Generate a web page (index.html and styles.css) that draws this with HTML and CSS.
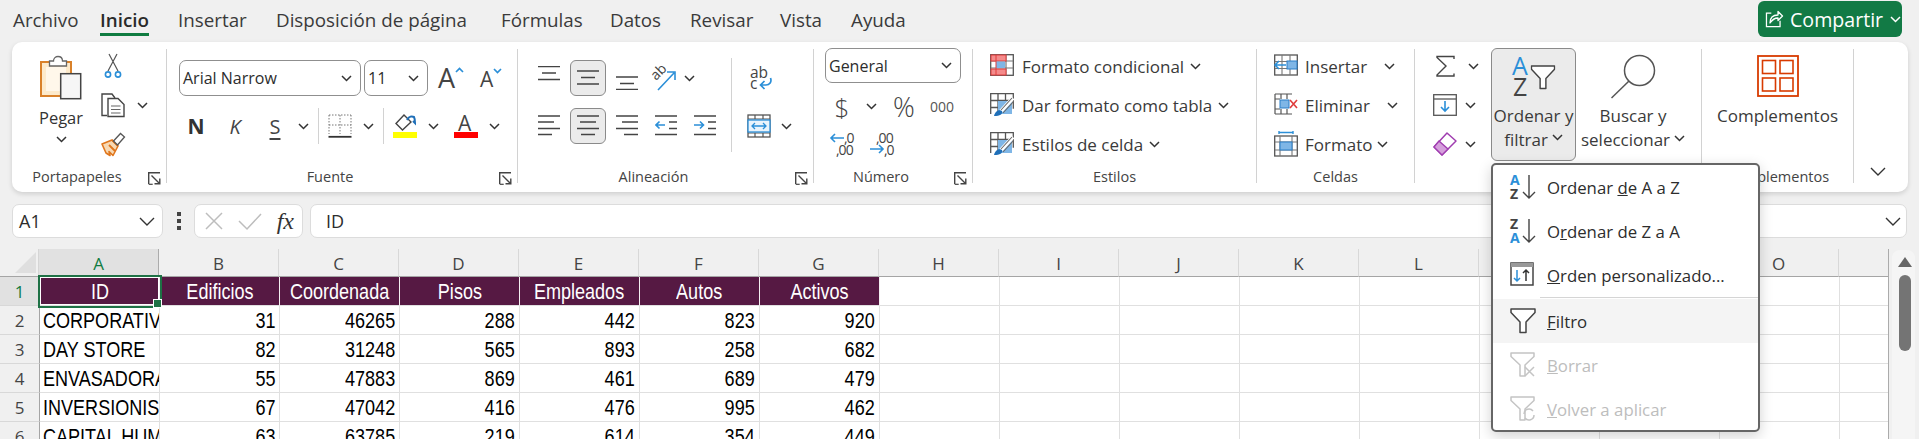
FILE: index.html
```html
<!DOCTYPE html>
<html lang="es">
<head>
<meta charset="utf-8">
<title>Excel</title>
<link rel="stylesheet" href="styles.css">
</head>
<body>
<svg class="defs" aria-hidden="true">
  <symbol id="chev" viewBox="0 0 11 7"><path d="M1 1l4.5 4.5L10 1" fill="none" stroke="#333" stroke-width="1.5"/></symbol>
  <symbol id="launch" viewBox="0 0 13 13"><path d="M.7 12V.7H12M3.5 3.5l8 8M11.8 6.5v5.3H6.5" fill="none" stroke="#444" stroke-width="1.4"/><path d="M.7 12.3h4" stroke="#444" stroke-width="1.2"/></symbol>
  <symbol id="al-top" viewBox="0 0 22 24"><path d="M0 .5h22M4 7h14M0 13.5h22" stroke="#444" stroke-width="1.3"/></symbol>
  <symbol id="al-mid" viewBox="0 0 22 24"><path d="M0 5h22M4 11.5h14M0 18h22" stroke="#444" stroke-width="1.3"/></symbol>
  <symbol id="al-bot" viewBox="0 0 22 24"><path d="M0 11h22M4 17.5h14M0 23.5h22" stroke="#444" stroke-width="1.3"/></symbol>
  <symbol id="h-left" viewBox="0 0 22 24"><path d="M0 2h22M0 8h16M0 14.5h22M0 20.5h14" stroke="#444" stroke-width="1.3"/></symbol>
  <symbol id="h-center" viewBox="0 0 22 24"><path d="M0 2h22M3 8h16M0 14.5h22M4 20.5h14" stroke="#444" stroke-width="1.3"/></symbol>
  <symbol id="h-right" viewBox="0 0 22 24"><path d="M0 2h22M6 8h16M0 14.5h22M8 20.5h14" stroke="#444" stroke-width="1.3"/></symbol>
  <symbol id="outdent" viewBox="0 0 22 24"><path d="M0 2h22M14 8h8M14 14.5h8M0 20.5h22" stroke="#444" stroke-width="1.3"/><path d="M10 11H1M4.500 7.500L1 11l3.500 3.500" fill="none" stroke="#2b8fd8" stroke-width="1.6"/></symbol>
  <symbol id="indent" viewBox="0 0 22 24"><path d="M0 2h22M14 8h8M14 14.5h8M0 20.500h22" stroke="#444" stroke-width="1.3"/><path d="M0 11h9.500M6 7.500L9.500 11 6 14.500" fill="none" stroke="#2b8fd8" stroke-width="1.6"/></symbol>
  <symbol id="brushgrid" viewBox="0 0 24 24"><path d="M.7 21V.7h22.600v15M.7 7.500h22.600M8 .7v20.300M15.500.7v10M.7 14.500h8" fill="none" stroke="#555" stroke-width="1.3"/><rect x="8" y="8" width="14" height="13" fill="#7fb6e6"/><path d="M23 5L11 18" stroke="#fff" stroke-width="4"/><path d="M22 5L11 17M24 8L13 20" stroke="#666" stroke-width="1.1"/><path d="M4 23c1-4 4-7 8-5 1 3-2 5-8 5z" fill="#1f6fb8"/></symbol>
  <symbol id="funnel" viewBox="0 0 26 26"><path d="M1 1h24v3.500L16 14v10.500h-6V14L1 4.500z" fill="#fff" stroke="#444" stroke-width="1.500" stroke-linejoin="round"/></symbol>
</svg>

<header class="topbar">
  <nav class="tabs">
    <span class="tab">Archivo</span>
    <span class="tab tab-active"><span class="tab-text">Inicio</span></span>
    <span class="tab">Insertar</span>
    <span class="tab">Disposición de página</span>
    <span class="tab">Fórmulas</span>
    <span class="tab">Datos</span>
    <span class="tab">Revisar</span>
    <span class="tab">Vista</span>
    <span class="tab">Ayuda</span>
  </nav>
  <button class="share">
    <svg class="ic" width="18" height="18" viewBox="0 0 18 18"><path d="M6 3H1v14h14v-6" fill="none" stroke="#fff" stroke-width="1.300" transform="translate(.5 .2) scale(.97)"/><path d="M5 13c0-5 3-8 8-8V1.500L17.500 6 13 10.500V8c-4 0-6 2-8 5z" fill="none" stroke="#fff" stroke-width="1.300" stroke-linejoin="round"/></svg>
    <span class="share-text">Compartir</span>
    <svg class="chev" viewBox="0 0 11 7"><path d="M1 1l4.500 4.500L10 1" fill="none" stroke="#fff" stroke-width="1.500"/></svg>
  </button>
</header>

<section class="ribbon">
  <!-- Portapapeles -->
  <div class="group g-clip">
    <div class="body clip-body">
      <div class="big-paste">
        <svg width="42" height="45" viewBox="0 0 42 45">
          <rect x="1" y="7" width="30" height="34" fill="#fdeacb" stroke="#d9812a" stroke-width="2"/>
          <rect x="6" y="12" width="20" height="24" fill="#fff7ea"/>
          <path d="M9.500 11V6h4c0-6 9-6 9 0h4v5z" fill="#fff" stroke="#666" stroke-width="1.300"/>
          <rect x="20.700" y="18.700" width="20" height="25" fill="#f6f6f6" stroke="#444" stroke-width="1.500"/>
        </svg>
        <span class="paste-text">Pegar</span>
        <svg class="chev"><use href="#chev"/></svg>
      </div>
      <div class="stack">
        <div class="line">
          <svg width="24" height="24" viewBox="0 0 24 24"><path d="M8 0l9 17M16 0L7 17" stroke="#555" stroke-width="1.200" fill="none"/><circle cx="7" cy="20.500" r="2.600" fill="none" stroke="#2b8fd8" stroke-width="1.600"/><circle cx="17" cy="20.500" r="2.600" fill="none" stroke="#2b8fd8" stroke-width="1.600"/></svg>
        </div>
        <div class="line">
          <svg width="24" height="24" viewBox="0 0 24 24"><path d="M6 22.500H1V1h10l3 4" fill="none" stroke="#444" stroke-width="1.400"/><path d="M7 5.500h10l6 6v12H7z" fill="#fff" stroke="#444" stroke-width="1.400"/><path d="M10 13h9.500M10 16.500h9.500M10 20h9.500" stroke="#666" stroke-width="1.200"/></svg>
          <svg class="chev chev-copy"><use href="#chev"/></svg>
        </div>
        <div class="line">
          <svg width="24" height="24" viewBox="0 0 24 24"><path d="M1 12l10-4 6 6-5 9.500-4-4 1 4-4-2.500z" fill="#f7d9b4" stroke="#e0761c" stroke-width="1.600" stroke-linejoin="round"/><path d="M8 13l6 6M11 8l6 6" stroke="#e0761c" stroke-width="1.800"/><path d="M12.500 9l7-7.500 4 3.500-7 8z" fill="#fff" stroke="#555" stroke-width="1.300"/></svg>
        </div>
      </div>
    </div>
    <div class="label"><span class="label-text">Portapapeles</span><svg class="launch"><use href="#launch"/></svg></div>
  </div>

  <!-- Fuente -->
  <div class="group g-font">
    <div class="body font-body">
      <div class="font-row1">
        <div class="combo combo-font"><span>Arial Narrow</span><svg class="chev"><use href="#chev"/></svg></div>
        <div class="combo combo-size"><span>11</span><svg class="chev"><use href="#chev"/></svg></div>
        <svg class="grow" width="26" height="24" viewBox="0 0 26 24"><text x="0" y="22" class="svgt" font-size="27" fill="#444">A</text><path d="M18 6l3.500-3.500L25 6" fill="none" stroke="#2b8fd8" stroke-width="1.700"/></svg>
        <svg class="shrink" width="22" height="22" viewBox="0 0 22 22"><text x="0" y="20" class="svgt" font-size="21" fill="#444">A</text><path d="M14 2l3.500 3.500L21 2" fill="none" stroke="#2b8fd8" stroke-width="1.700"/></svg>
      </div>
      <div class="font-row2">
        <span class="cell fs fs-n">N</span>
        <span class="cell fs fs-k">K</span>
        <span class="cell fs fs-s">S</span>
        <span class="cell"><svg class="chev"><use href="#chev"/></svg></span>
        <span class="cell"><i class="vsep"></i></span>
        <span class="cell"><svg width="24" height="24" viewBox="0 0 24 24"><path d="M1 1h22M1 1v19M23 1v19M12 1v19M1 11h22" fill="none" stroke="#777" stroke-width="1" stroke-dasharray="1.500 1.500"/><path d="M.5 22.800h23" stroke="#333" stroke-width="1.800"/></svg></span>
        <span class="cell"><svg class="chev"><use href="#chev"/></svg></span>
        <span class="cell"><i class="vsep"></i></span>
        <span class="cell"><svg width="24" height="24" viewBox="0 0 24 24"><path d="M11 1l-8 8.500 6.500 6.500 8.500-8z" fill="#fff" stroke="#444" stroke-width="1.400"/><path d="M14 6c2-4 5-4 7-3 1 2 1 4 1 6l-2-2" fill="none" stroke="#1f6fb8" stroke-width="2"/><rect x="0" y="18" width="24" height="6" fill="#ffff00"/></svg></span>
        <span class="cell"><svg class="chev"><use href="#chev"/></svg></span>
        <span class="cell"><svg width="24" height="24" viewBox="0 0 24 24"><text x="4" y="17" class="svgt" font-size="21" fill="#444">A</text><rect x="0" y="18" width="24" height="6" fill="#ff0000"/></svg></span>
        <span class="cell"><svg class="chev"><use href="#chev"/></svg></span>
      </div>
    </div>
    <div class="label"><span class="label-text">Fuente</span><svg class="launch"><use href="#launch"/></svg></div>
  </div>

  <!-- Alineación -->
  <div class="group g-align">
    <div class="body align-body">
      <div class="align-grid">
        <span class="cell"><svg class="a22"><use href="#al-top"/></svg></span>
        <span class="cell pressed"><svg class="a22"><use href="#al-mid"/></svg></span>
        <span class="cell"><svg class="a22"><use href="#al-bot"/></svg></span>
        <span class="cell orient">
          <svg width="24" height="24" viewBox="0 0 24 24"><text class="svgt" font-size="14" fill="#444" transform="translate(3 15) rotate(-45)">ab</text><path d="M5 24L21 7M14 6h8v8" fill="none" stroke="#2b8fd8" stroke-width="1.600"/></svg>
          <svg class="chev"><use href="#chev"/></svg>
        </span>
        <span class="cell"><svg class="a22"><use href="#h-left"/></svg></span>
        <span class="cell pressed"><svg class="a22"><use href="#h-center"/></svg></span>
        <span class="cell"><svg class="a22"><use href="#h-right"/></svg></span>
        <span class="cell"><svg class="a22"><use href="#outdent"/></svg></span>
        <span class="cell"><svg class="a22"><use href="#indent"/></svg></span>
      </div>
      <i class="vsep vsep-tall"></i>
      <div class="align-right">
        <div class="line wrap-line">
          <svg width="24" height="24" viewBox="0 0 24 24"><text x="0" y="12" class="svgt" font-size="15.500" fill="#444">ab</text><text x="0" y="23" class="svgt" font-size="15.500" fill="#444">c</text><path d="M20.500 12c1.500 4-1 7-4.500 7h-5M14.500 15l-4 4 4 4" fill="none" stroke="#2b8fd8" stroke-width="1.700"/></svg>
        </div>
        <div class="line merge-line">
          <svg width="24" height="24" viewBox="0 0 24 24"><rect x="1" y="1" width="22" height="22" fill="#fff" stroke="#555" stroke-width="1.300"/><path d="M1 5h22M1 19h22M8 1v4M16 1v4M8 19v4M16 19v4" stroke="#555" stroke-width="1.200"/><rect x="1" y="6" width="22" height="12" fill="#eaf4fc" stroke="#2b8fd8" stroke-width="1.300"/><path d="M5 12h14M8 9l-3 3 3 3M16 9l3 3-3 3" fill="none" stroke="#2b8fd8" stroke-width="1.300"/></svg>
          <svg class="chev"><use href="#chev"/></svg>
        </div>
      </div>
    </div>
    <div class="label"><span class="label-text">Alineación</span><svg class="launch"><use href="#launch"/></svg></div>
  </div>

  <!-- Número -->
  <div class="group g-num">
    <div class="body num-body">
      <div class="combo combo-num"><span>General</span><svg class="chev"><use href="#chev"/></svg></div>
      <div class="num-row">
        <span class="cell sym-dollar">$</span>
        <span class="cell"><svg class="chev"><use href="#chev"/></svg></span>
        <span class="cell sym-pct">%</span>
        <span class="cell sym-000">000</span>
      </div>
      <div class="num-row2">
        <svg width="24" height="24" viewBox="0 0 24 24"><path d="M14 8H1M5 4L1 8l4 4" fill="none" stroke="#2b8fd8" stroke-width="1.600"/><text x="14" y="13" class="svgn" font-size="14" fill="#444">,0</text><text x="6" y="25" class="svgn" font-size="14" fill="#444">,00</text></svg>
        <svg width="24" height="24" viewBox="0 0 24 24"><text x="7" y="13" class="svgn" font-size="14" fill="#444">,00</text><path d="M1 19h13M10 15l4 4-4 4" fill="none" stroke="#2b8fd8" stroke-width="1.600"/><text x="15" y="25" class="svgn" font-size="14" fill="#444">,0</text></svg>
      </div>
    </div>
    <div class="label"><span class="label-text">Número</span><svg class="launch"><use href="#launch"/></svg></div>
  </div>

  <!-- Estilos -->
  <div class="group g-style">
    <div class="body stack list-body">
      <div class="line">
        <svg width="24" height="24" viewBox="0 0 24 24"><rect x=".7" y=".7" width="22.600" height="20.600" fill="#fff" stroke="#555" stroke-width="1.300"/><path d="M16 1v20M1 7h22M1 14h22" stroke="#777" stroke-width="1.200"/><rect x="1" y="1" width="15" height="6" fill="#f48b8b" stroke="#e03c3c"/><rect x="1" y="15" width="15" height="6" fill="#f48b8b" stroke="#e03c3c"/><rect x="6" y="7.500" width="9" height="6.500" fill="#7fb6e6"/><path d="M6 1v20" stroke="#e03c3c"/></svg>
        <span>Formato condicional</span><svg class="chev"><use href="#chev"/></svg>
      </div>
      <div class="line">
        <svg width="24" height="24"><use href="#brushgrid"/></svg>
        <span>Dar formato como tabla</span><svg class="chev"><use href="#chev"/></svg>
      </div>
      <div class="line">
        <svg width="24" height="24"><use href="#brushgrid"/></svg>
        <span>Estilos de celda</span><svg class="chev"><use href="#chev"/></svg>
      </div>
    </div>
    <div class="label label-plain"><span class="label-text">Estilos</span></div>
  </div>

  <!-- Celdas -->
  <div class="group g-cell">
    <div class="body stack list-body cell-list">
      <div class="line">
        <svg width="24" height="24" viewBox="0 0 24 24"><rect x=".7" y="1" width="22.600" height="20" fill="#fff" stroke="#555" stroke-width="1.300"/><path d="M8 1v20M16 1v20M1 7.500h22M1 14.500h22" stroke="#777" stroke-width="1.100"/><rect x="13" y="7" width="10" height="8" fill="#7fb6e6" stroke="#2b7fc8"/><path d="M12 11H1M5 7l-4 4 4 4" fill="none" stroke="#2b8fd8" stroke-width="1.600"/></svg>
        <span>Insertar</span><svg class="chev chev-far"><use href="#chev"/></svg>
      </div>
      <div class="line">
        <svg width="24" height="24" viewBox="0 0 24 24"><path d="M1 1h17M1 21h17M1 1v20M7 1v5M13 1v5M7 16v5M13 16v5M1 6h5M1 16h5" fill="none" stroke="#555" stroke-width="1.200"/><rect x="6" y="7" width="9" height="8" fill="#7fb6e6" stroke="#2b7fc8"/><path d="M16 7l7 8M23 7l-7 8" stroke="#e03c3c" stroke-width="1.600"/></svg>
        <span>Eliminar</span><svg class="chev chev-far"><use href="#chev"/></svg>
      </div>
      <div class="line">
        <svg width="24" height="26" viewBox="0 0 24 26"><path d="M5 1.500h14M5 0v3M19 0v3" stroke="#2b8fd8" stroke-width="1.400"/><rect x=".7" y="5" width="22.600" height="20" fill="#fff" stroke="#555" stroke-width="1.300"/><path d="M6 5v20M18 5v20M1 11h22M1 19h22" stroke="#777" stroke-width="1.100"/><rect x="6" y="11" width="12" height="8" fill="#7fb6e6" stroke="#2b7fc8"/></svg>
        <span>Formato</span><svg class="chev"><use href="#chev"/></svg>
      </div>
    </div>
    <div class="label label-plain"><span class="label-text">Celdas</span></div>
  </div>

  <!-- Edición -->
  <div class="group g-edit">
    <div class="body edit-body">
      <div class="stack">
        <div class="line">
          <svg class="sigma" width="24" height="24" viewBox="0 0 24 24"><path d="M21 5V2.500H4v1L13 12l-9 9v1h17v-2.500" fill="none" stroke="#444" stroke-width="1.400"/></svg>
          <svg class="chev chev-sigma"><use href="#chev"/></svg>
        </div>
        <div class="line">
          <svg width="24" height="24" viewBox="0 0 24 24"><rect x=".7" y="1.700" width="22.600" height="20.600" fill="#fff" stroke="#555" stroke-width="1.300"/><path d="M1 6h22" stroke="#555" stroke-width="1.300"/><path d="M12 8v10M8 14l4 4 4-4" fill="none" stroke="#2b8fd8" stroke-width="1.600"/></svg>
          <svg class="chev"><use href="#chev"/></svg>
        </div>
        <div class="line">
          <svg width="24" height="24" viewBox="0 0 24 24"><path d="M14 1l9 8-14 14-8-8z" fill="#fff" stroke="#a03db0" stroke-width="1.500" stroke-linejoin="round"/><path d="M6 9l9 8-6 6-8-8z" fill="#d59fdc" stroke="#a03db0" stroke-width="1.400" stroke-linejoin="round"/></svg>
          <svg class="chev"><use href="#chev"/></svg>
        </div>
      </div>
      <div class="tall pressed-tall">
        <svg width="44" height="42" viewBox="0 0 44 42">
          <text x="0" y="19" class="svgt" font-size="25" fill="#2b8fd8">A</text>
          <text x="1" y="40" class="svgt" font-size="25" fill="#444">Z</text>
          <svg x="18.500" y="9" width="25" height="25"><use href="#funnel"/></svg>
        </svg>
        <span class="tall-text">Ordenar y</span>
        <span class="tall-text">filtrar <svg class="chev"><use href="#chev"/></svg></span>
      </div>
      <div class="tall">
        <svg width="46" height="44" viewBox="0 0 46 44"><circle cx="29.500" cy="14.500" r="15" fill="none" stroke="#555" stroke-width="1.500"/><path d="M19 25L1.500 42" stroke="#555" stroke-width="1.500"/></svg>
        <span class="tall-text">Buscar y</span>
        <span class="tall-text">seleccionar <svg class="chev"><use href="#chev"/></svg></span>
      </div>
    </div>
    <div class="label label-plain"><span class="label-text">Edición</span></div>
  </div>

  <!-- Complementos -->
  <div class="group g-add">
    <div class="body add-body">
      <svg width="42" height="42" viewBox="0 0 42 42"><rect x="1" y="1" width="40" height="40" fill="#fff" stroke="#d83b01" stroke-width="1.800"/><rect x="5.500" y="5.500" width="13" height="13" fill="#fff" stroke="#d83b01" stroke-width="1.600"/><rect x="23" y="5.500" width="13" height="13" fill="#fff" stroke="#d83b01" stroke-width="1.600"/><rect x="5.500" y="23" width="13" height="13" fill="#fff" stroke="#d83b01" stroke-width="1.600"/><rect x="23" y="23" width="13" height="13" fill="#fff" stroke="#d83b01" stroke-width="1.600"/></svg>
      <span class="tall-text">Complementos</span>
    </div>
    <div class="label label-plain"><span class="label-text">Complementos</span></div>
  </div>

  <div class="collapse"><svg class="chev-big" viewBox="0 0 16 9"><path d="M1 1l7 7 7-7" fill="none" stroke="#333" stroke-width="1.400"/></svg></div>
</section>

<section class="formula">
  <div class="box namebox"><span>A1</span><svg class="chev-big" viewBox="0 0 16 9"><path d="M1 1l7 7 7-7" fill="none" stroke="#333" stroke-width="1.400"/></svg></div>
  <div class="dots"><i></i><i></i><i></i></div>
  <div class="box fxbox">
    <svg width="20" height="20" viewBox="0 0 20 20"><path d="M2 2l16 16M18 2L2 18" stroke="#bdbdbd" stroke-width="1.500"/></svg>
    <svg width="24" height="18" viewBox="0 0 24 18"><path d="M1 9l8 8L23 2" fill="none" stroke="#bdbdbd" stroke-width="1.500"/></svg>
    <span class="fx">fx</span>
  </div>
  <div class="box input"><span>ID</span><svg class="chev-big" viewBox="0 0 16 9"><path d="M1 1l7 7 7-7" fill="none" stroke="#333" stroke-width="1.400"/></svg></div>
</section>

<main class="sheet">
  <div class="grid">
    <div class="row colhead">
      <div class="corner"><i></i></div>
      <div class="ch ch-on">A</div><div class="ch">B</div><div class="ch">C</div><div class="ch">D</div><div class="ch">E</div><div class="ch">F</div><div class="ch">G</div><div class="ch">H</div><div class="ch">I</div><div class="ch">J</div><div class="ch">K</div><div class="ch">L</div><div class="ch">M</div><div class="ch">N</div><div class="ch">O</div><div class="ch"></div>
    </div>
    <div class="row">
      <div class="rh rh-on">1</div>
      <div class="c hd sel"><span>ID</span></div><div class="c hd"><span>Edificios</span></div><div class="c hd"><span>Coordenada</span></div><div class="c hd"><span>Pisos</span></div><div class="c hd"><span>Empleados</span></div><div class="c hd"><span>Autos</span></div><div class="c hd"><span>Activos</span></div><div class="rest"></div>
    </div>
    <div class="row">
      <div class="rh">2</div>
      <div class="c t"><span>CORPORATIVO</span></div><div class="c n"><span>31</span></div><div class="c n"><span>46265</span></div><div class="c n"><span>288</span></div><div class="c n"><span>442</span></div><div class="c n"><span>823</span></div><div class="c n"><span>920</span></div><div class="rest"></div>
    </div>
    <div class="row">
      <div class="rh">3</div>
      <div class="c t"><span>DAY STORE</span></div><div class="c n"><span>82</span></div><div class="c n"><span>31248</span></div><div class="c n"><span>565</span></div><div class="c n"><span>893</span></div><div class="c n"><span>258</span></div><div class="c n"><span>682</span></div><div class="rest"></div>
    </div>
    <div class="row">
      <div class="rh">4</div>
      <div class="c t"><span>ENVASADORA</span></div><div class="c n"><span>55</span></div><div class="c n"><span>47883</span></div><div class="c n"><span>869</span></div><div class="c n"><span>461</span></div><div class="c n"><span>689</span></div><div class="c n"><span>479</span></div><div class="rest"></div>
    </div>
    <div class="row">
      <div class="rh">5</div>
      <div class="c t"><span>INVERSIONISTAS</span></div><div class="c n"><span>67</span></div><div class="c n"><span>47042</span></div><div class="c n"><span>416</span></div><div class="c n"><span>476</span></div><div class="c n"><span>995</span></div><div class="c n"><span>462</span></div><div class="rest"></div>
    </div>
    <div class="row">
      <div class="rh">6</div>
      <div class="c t"><span>CAPITAL HUMANO</span></div><div class="c n"><span>63</span></div><div class="c n"><span>63785</span></div><div class="c n"><span>219</span></div><div class="c n"><span>614</span></div><div class="c n"><span>354</span></div><div class="c n"><span>449</span></div><div class="rest"></div>
    </div>
  </div>
  <div class="vscroll"><i class="up"></i><i class="thumb"></i></div>
</main>

<div class="menu">
  <div class="mi">
    <svg width="26" height="26" viewBox="0 0 26 26"><text x="0" y="11" class="svgb" font-size="14" fill="#2b8fd8">A</text><text x="0" y="25" class="svgb" font-size="14" fill="#444">Z</text><path d="M19 1v23M13 18l6 6 6-6" fill="none" stroke="#444" stroke-width="1.400"/></svg>
    <span>Ordenar <u>d</u>e A a Z</span>
  </div>
  <div class="mi">
    <svg width="26" height="26" viewBox="0 0 26 26"><text x="0" y="11" class="svgb" font-size="14" fill="#444">Z</text><text x="0" y="25" class="svgb" font-size="14" fill="#2b8fd8">A</text><path d="M19 1v23M13 18l6 6 6-6" fill="none" stroke="#444" stroke-width="1.400"/></svg>
    <span>O<u>r</u>denar de Z a A</span>
  </div>
  <div class="mi">
    <svg width="26" height="26" viewBox="0 0 26 26"><rect x="1" y="1" width="22" height="22" fill="#fff" stroke="#444" stroke-width="1.500"/><rect x="1" y="1" width="22" height="4" fill="#999"/><path d="M7 8v11M4 16l3 3 3-3" fill="none" stroke="#2b8fd8" stroke-width="1.500"/><path d="M16 19V8M13 11l3-3 3 3" fill="none" stroke="#333" stroke-width="1.500"/></svg>
    <span><u>O</u>rden personalizado...</span>
  </div>
  <div class="msep"></div>
  <div class="mi mi-hover">
    <svg width="26" height="26" viewBox="0 0 26 26"><use href="#funnel"/></svg>
    <span><u>F</u>iltro</span>
  </div>
  <div class="mi mi-off">
    <svg width="26" height="26" viewBox="0 0 26 26"><path d="M1 1h23v3.500L15 13v11H10V13L1 4.500z" fill="#fff" stroke="#c4c4c4" stroke-width="1.500" stroke-linejoin="round"/><path d="M15 15l9 9M24 15l-9 9" stroke="#c4c4c4" stroke-width="1.500"/></svg>
    <span><u>B</u>orrar</span>
  </div>
  <div class="mi mi-off">
    <svg width="26" height="26" viewBox="0 0 26 26"><path d="M1 1h23v3.500L15 13v11H10V13L1 4.500z" fill="#fff" stroke="#c4c4c4" stroke-width="1.500" stroke-linejoin="round"/><path d="M14 18a5 5 0 0 1 9-3M24 19a5 5 0 0 1-9 3" fill="none" stroke="#c4c4c4" stroke-width="1.500"/></svg>
    <span><u>V</u>olver a aplicar</span>
  </div>
</div>
</body>
</html>
```
FILE: styles.css
```css
* { box-sizing: border-box; }
html, body { margin: 0; height: 439px; overflow: hidden; }
body {
  position: relative;
  background: #f0f0f0;
  color: #333;
  font-family: "Open Sans", "Noto Sans", sans-serif;
  font-size: 16px;
}
.defs { display: none; }
.svgt { font-family: "Open Sans", sans-serif; }
.svgb { font-family: "Open Sans", sans-serif; font-weight: 700; }
.svgn { font-family: "Open Sans", sans-serif; letter-spacing: -1px; }
svg { flex: none; display: block; overflow: visible; }
.chev { width: 11px; height: 7px; flex: none; }
.chev-big { width: 16px; height: 9px; flex: none; }
.launch { width: 13px; height: 13px; justify-self: end; align-self: start; margin: 11px 5px 0 0; }

/* top bar */
.topbar { display: flex; justify-content: space-between; height: 42px; padding-left: 13px; padding-right: 17px; }
.tabs {
  display: grid;
  grid-template-columns: 87px 78px 98px 225px 109px 80px 90px 71px auto;
  font-size: 18.8px;
  color: #3a3a3a;
}
.tab { padding-top: 7px; line-height: 26px; white-space: nowrap; }
.tab-text { display: inline-block; height: 29px; border-bottom: 3px solid #107c41; font-weight: 600; color: #2a2a2a; }
.share {
  display: flex; align-items: center; gap: 7px;
  width: 144px; height: 36px; margin-top: 1px; padding: 0 7px;
  background: #127a45; border: 0; border-radius: 6px;
  color: #fff; font: inherit; font-size: 19.6px;
}
.share-text { width: 94px; text-align: left; }

/* ribbon */
.ribbon {
  display: flex;
  height: 150px;
  margin: 0 11px 0 12px;
  padding: 7px 0 9px;
  background: #fff;
  border-radius: 10px;
  box-shadow: 0 2px 5px rgba(0,0,0,.14);
}
.group { display: grid; grid-template-rows: 112px 22px; border-right: 1px solid #d2d2d2; }
.g-clip { width: 155px; }
.g-font { width: 351px; }
.g-align { width: 296px; }
.g-num { width: 159px; }
.g-style { width: 284px; }
.g-cell { width: 158px; }
.g-edit { width: 287px; }
.g-add { width: 152px; }
.collapse { flex: 1; display: flex; justify-content: center; padding-top: 118px; padding-right: 6px; }
.label { display: grid; grid-template-columns: 1fr auto 1fr 24px; font-size: 14.5px; line-height: 32px; color: #444; white-space: nowrap; min-width: 0; height: 22px; }
.label-plain { grid-template-columns: 1fr auto 1fr; }
.label-text { grid-column: 2; }
.label .launch { grid-column: 4; }

.line { display: flex; align-items: center; gap: 8px; white-space: nowrap; }
.stack { display: grid; grid-auto-rows: 34px; row-gap: 5px; align-content: start; }
.cell { display: flex; align-items: center; justify-content: center; }
.vsep { display: block; width: 1px; height: 36px; background: #d2d2d2; }

.clip-body { display: flex; padding-left: 28px; }
.big-paste { width: 42px; display: flex; flex-direction: column; align-items: center; padding-top: 6px; }
.paste-text { margin-top: 6px; line-height: 24px; font-size: 16.5px; }
.big-paste .chev { margin-top: 6px; }
.clip-body .stack { margin-left: 19px; }
.chev-copy { margin-left: 4px; }

.font-body { padding: 11px 0 0 12px; }
.font-row1 { display: flex; align-items: center; height: 36px; }
.combo {
  display: flex; align-items: center; justify-content: space-between;
  height: 36px; padding: 0 8px 0 3px;
  background: #fff; border: 1px solid #8f8f8f; border-radius: 7px;
  color: #2d2d2d; font-size: 16px;
}
.combo-font { width: 182px; }
.combo-size { width: 64px; margin-left: 3px; }
.grow { margin-left: 10px; }
.shrink { margin-left: 16px; }
.font-row2 {
  display: grid;
  grid-template-columns: 34px 44px 36px 20px 10px 33px 24px 6px 38px 18px 48px 8px;
  height: 36px;
  margin-top: 12px;
}
.fs { font-size: 20px; color: #444; }
.fs-n { font-weight: 700; color: #333; font-size: 21px; }
.fs-k { font-style: italic; }
.fs-s { text-decoration: underline; text-underline-offset: 4px; }

.align-body { display: flex; padding: 11px 0 0 11px; }
.align-grid { display: grid; grid-template-columns: repeat(5, 39px); grid-auto-rows: 36px; row-gap: 12px; }
.a22 { width: 22px; height: 24px; }
.pressed { width: 36px; margin: 0 1.5px; background: #ebebeb; border: 1px solid #8a8a8a; border-radius: 6px; }
.orient { grid-column: 4 / span 2; justify-content: flex-start; padding-left: 7px; gap: 7px; }
.vsep-tall { height: 94px; margin: -2px 0 0 7px; }
.align-right { display: grid; grid-auto-rows: 36px; row-gap: 12px; padding-left: 15px; }
.wrap-line { padding-left: 3px; }
.merge-line { gap: 10px; }

.num-body { padding-left: 11px; }
.combo-num { width: 136px; height: 35px; margin-top: -1px; }
.num-row { display: grid; grid-template-columns: 34px 24px 42px 34px; height: 34px; margin-top: 5px; }
.sym-dollar { font-size: 26px; font-weight: 300; color: #444; }
.sym-pct { font-size: 27px; font-weight: 300; color: #444; }
.sym-000 { font-size: 14px; color: #555; }
.num-row2 { display: flex; gap: 15px; padding-left: 5px; margin-top: 8px; }

.list-body { padding-left: 17px; font-size: 17px; color: #3a3a3a; }
.list-body .chev { margin-left: -2px; }
.list-body .chev-far { margin-left: 12px; }
.cell-list .line { gap: 7px; }
.cell-list .chev-far { margin-left: 10px; }

.edit-body { display: flex; }
.edit-body .stack { padding-left: 18px; width: 76px; }
.chev-sigma { margin-left: 3px; }
.sigma { margin-left: 0; }
.tall {
  display: flex; flex-direction: column; align-items: center;
  width: 85px; height: 113px; margin: -1px 0 0 0; padding-top: 7px;
  border: 1px solid transparent; border-radius: 6px;
  font-size: 17px; color: #3a3a3a;
}
.pressed-tall { background: #ebebeb; border-color: #8a8a8a; }
.tall + .tall { width: 110px; margin-left: 2px; }
.tall svg:first-child { margin-bottom: 6px; }
.tall + .tall svg:first-child { margin-bottom: 4px; }
.tall-text { display: flex; align-items: center; gap: 4px; line-height: 24px; white-space: nowrap; }
.add-body { display: flex; flex-direction: column; align-items: center; padding-top: 6px; font-size: 17px; color: #3a3a3a; }
.add-body svg { margin-bottom: 7px; }

/* formula bar */
.formula { display: flex; align-items: center; height: 34px; margin: 12px 12px 0 12px; }
.box { display: flex; align-items: center; height: 34px; background: #fff; border: 1px solid #dcdcdc; border-radius: 7px; }
.namebox { width: 151px; justify-content: space-between; padding: 0 7px 0 6px; font-size: 18px; color: #2d2d2d; }
.dots { display: grid; gap: 3px; width: 31px; justify-items: center; }
.dots i { width: 4px; height: 4px; background: #444; }
.fxbox { width: 109px; padding: 0 8px 0 9px; justify-content: space-between; }
.fx { font-family: "Liberation Serif", serif; font-style: italic; font-size: 24px; color: #333; }
.input { flex: 1; margin-left: 7px; justify-content: space-between; padding: 0 5px 0 15px; font-size: 18px; color: #2d2d2d; }

/* sheet */
.sheet { display: flex; margin-top: 11px; }
.grid { width: 1889px; border-right: 1px solid #ababab; }
.row { display: flex; height: 29px; }
.colhead { height: 28px; }
.corner { position: relative; width: 40px; border-right: 1px solid #d5d5d5; border-bottom: 1px solid #a5a5a5; }
.corner i { position: absolute; left: 15px; top: 3px; border-style: solid; border-width: 0 0 21px 21px; border-color: transparent transparent #dfdfdf transparent; }
.ch {
  flex: none; width: 120px; text-align: center; line-height: 30px; font-size: 17px; color: #444;
  border-right: 1px solid #d8d8d8; border-bottom: 1px solid #a5a5a5;
}
.ch:last-child { width: 49px; border-right: 0; }
.ch-on { background: #e1e1e1; color: #107c41; border-right-color: #ababab; border-bottom: 2px solid #107c41; }
.rh {
  flex: none; width: 40px; text-align: center; line-height: 29px; font-size: 17px; color: #444; background: #f0f0f0;
  border-right: 1px solid #a5a5a5; border-bottom: 1px solid #d8d8d8;
}
.rh-on { background: #e1e1e1; color: #107c41; }
.c {
  flex: none; display: flex; width: 120px; overflow: hidden; white-space: nowrap; background: #fff;
  font-family: "Liberation Sans", sans-serif; font-size: 22px; line-height: 30px; color: #000;
  border-right: 1px solid #e0e0e0; border-bottom: 1px solid #e0e0e0;
}
.c > span { flex: none; display: block; transform: scaleX(.82); }
.t { padding-left: 3px; }
.t > span { transform-origin: left center; }
.n { justify-content: flex-end; padding-right: 4px; }
.n > span { transform-origin: right center; }
.hd { justify-content: center; background: #561943; color: #fff; border-right-color: #f4eef2; border-bottom-color: #e0e0e0; }
.sel { position: relative; overflow: visible; outline: 2px solid #1e7145; outline-offset: 0; box-shadow: inset 0 0 0 1px #fff; z-index: 1; }
.sel::after { content: ""; position: absolute; right: -3px; bottom: -3px; width: 7px; height: 7px; background: #1e7145; border: 1px solid #fff; }
.rest {
  flex: 1; background-color: #fff;
  background-image: repeating-linear-gradient(to right, transparent 0 119px, #e0e0e0 119px 120px);
  border-bottom: 1px solid #e0e0e0;
}
.vscroll { position: relative; width: 23px; height: 190px; margin: 1px 0 0 3px; background: #f5f5f5; border-radius: 8px 8px 0 0; }
.up { position: absolute; left: 6px; top: 7px; border-style: solid; border-width: 0 7px 10px; border-color: transparent transparent #666; }
.thumb { position: absolute; left: 7px; top: 25px; width: 12px; height: 76px; background: #747474; border-radius: 6px; }

/* menu */
.menu {
  position: absolute; left: 1491px; top: 163px; width: 269px; height: 269px;
  background: #fff; border: 2px solid #666; border-radius: 5px;
  box-shadow: 0 4px 14px rgba(0,0,0,.18);
  font-size: 16.8px; color: #2d2d2d; z-index: 5;
}
.mi { display: flex; align-items: center; gap: 11px; height: 44px; padding-left: 17px; white-space: nowrap; }
.msep { height: 2px; margin-left: 47px; border-top: 1px solid #d5d5d5; }
.mi-hover { background: #f4f4f4; }
.mi-off { color: #bdbdbd; }
```
